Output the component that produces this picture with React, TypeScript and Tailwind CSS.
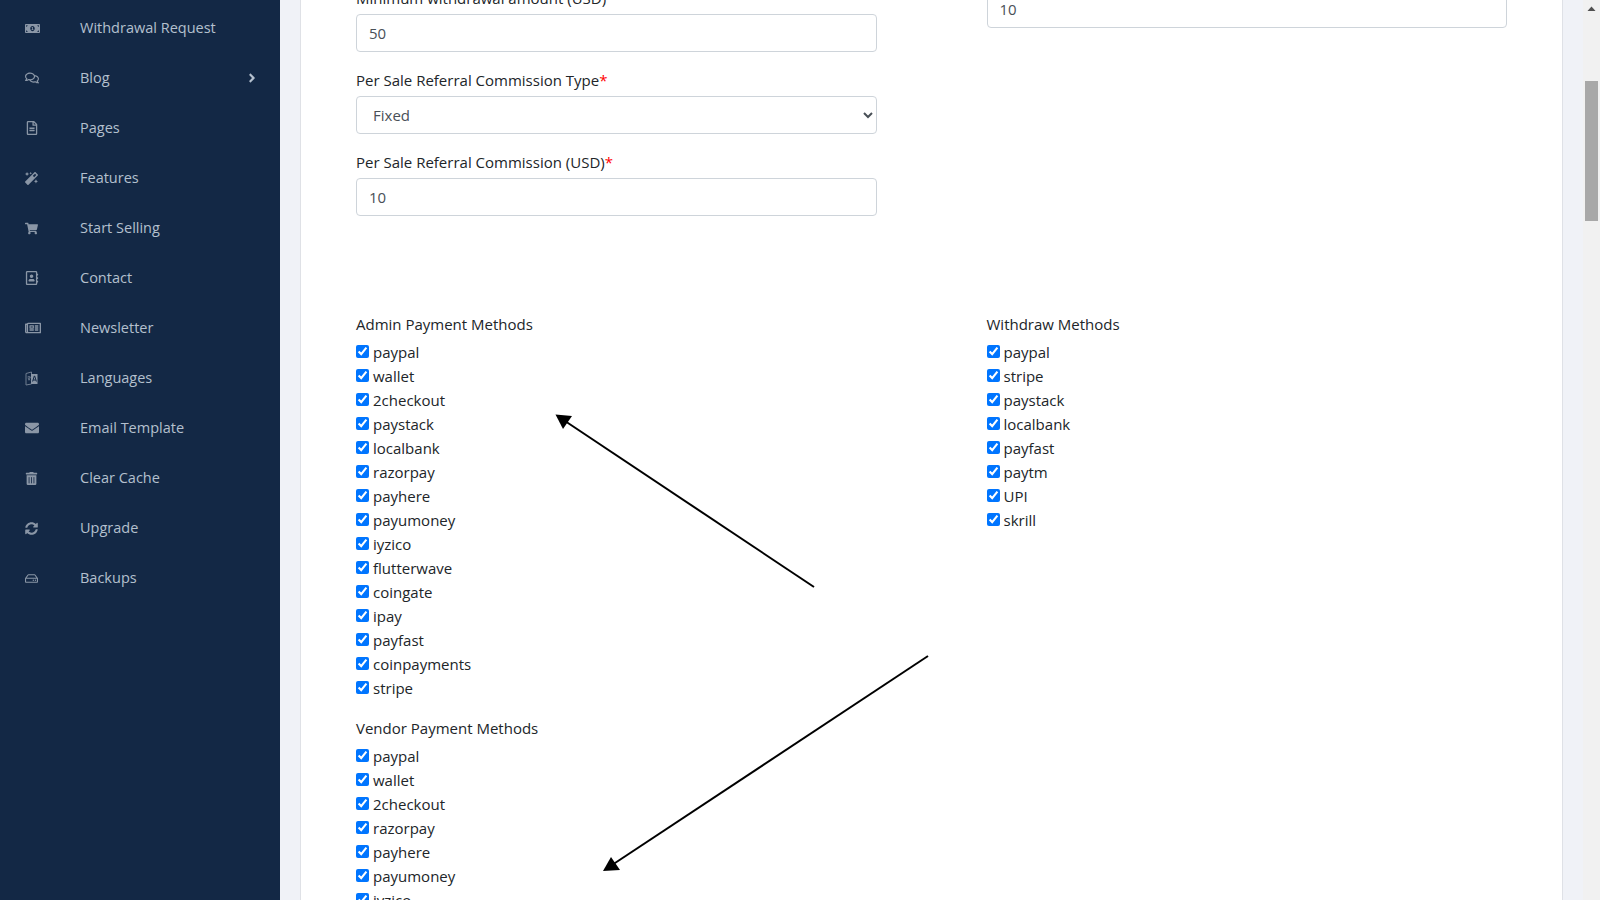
import { FaMoneyBillAlt, FaRegComments, FaRegFileAlt, FaMagic, FaShoppingCart, FaRegAddressBook, FaRegNewspaper, FaEnvelope, FaTrashAlt, FaSyncAlt, FaRegHdd, FaAngleRight } from "react-icons/fa";
import type { ReactNode } from "react";

function LanguageIcon() {
  return (
    <svg width="13" height="15" viewBox="0 0 13 15" fill="none">
      <path d="M1 2.5 6.5 1v12L1 14z" fill="#132845" stroke="#6f7d90" strokeWidth="1" />
      <path d="M6 3h6.5v10H6z" fill="#8a96a6" />
      <path d="M2.5 6h3M4 5v1M3 9c1 0 2-1.5 2.2-3M3 7c.4 1 1.2 1.8 2.2 2.2" stroke="#8a96a6" strokeWidth=".7" />
      <path d="M7.6 10.5 9.3 5h.4l1.7 5.5M8.2 9h2.6" stroke="#132845" strokeWidth="1" />
    </svg>
  );
}

const nav: [string, ReactNode][] = [
  ["Withdrawal Request", <FaMoneyBillAlt className="text-[15px]" />],
  ["Blog", <FaRegComments className="text-[14px]" />],
  ["Pages", <FaRegFileAlt className="text-[14px]" />],
  ["Features", <FaMagic className="text-[13px]" />],
  ["Start Selling", <FaShoppingCart className="text-[13px]" />],
  ["Contact", <FaRegAddressBook className="text-[14px]" />],
  ["Newsletter", <FaRegNewspaper className="text-[16px]" />],
  ["Languages", <LanguageIcon />],
  ["Email Template", <FaEnvelope className="text-[14px]" />],
  ["Clear Cache", <FaTrashAlt className="text-[13px]" />],
  ["Upgrade", <FaSyncAlt className="text-[13px]" />],
  ["Backups", <FaRegHdd className="text-[13px]" />],
];

const admin = ["paypal", "wallet", "2checkout", "paystack", "localbank", "razorpay", "payhere", "payumoney", "iyzico", "flutterwave", "coingate", "ipay", "payfast", "coinpayments", "stripe"];
const vendor = ["paypal", "wallet", "2checkout", "razorpay", "payhere", "payumoney", "iyzico"];
const withdraw = ["paypal", "stripe", "paystack", "localbank", "payfast", "paytm", "UPI", "skrill"];

const inputCls = "block w-full h-[38px] rounded border border-[#ced4da] bg-white px-3 text-[#495057] text-[15px] outline-none";

function Field({ label, req, children }: { label: string; req?: boolean; children: ReactNode }) {
  return (
    <div className="mb-[16px]">
      <div className="mb-[4px] h-[24px] leading-[24px]">
        {label}
        {req && <span className="text-[#ff0000]">*</span>}
      </div>
      {children}
    </div>
  );
}

function Checks({ title, items }: { title: string; items: string[] }) {
  return (
    <div className="mb-[16px]">
      <div className="mb-[4px] h-[24px] leading-[24px]">{title}</div>
      {items.map((m) => (
        <label key={m} className="flex h-[24px] items-center">
          <input type="checkbox" defaultChecked readOnly className="m-0 mr-[4px] mb-[2px] h-[13px] w-[13px] accent-[#0075ff]" />
          <span>{m}</span>
        </label>
      ))}
    </div>
  );
}

export default function App() {
  return (
    <div className="relative flex h-[900px] w-[1600px] overflow-hidden bg-[#f0f2f7] font-['Open_Sans','Noto_Sans',sans-serif]">
      <aside className="h-full w-[280px] shrink-0 bg-[#132845] pt-[3px]">
        {nav.map(([t, icon]) => (
          <div key={t} className="flex h-[50px] items-center text-[14.5px] text-[#b4c0ce]">
            <span className="flex w-[80px] shrink-0 pl-[25px] text-[#8a96a6]">{icon}</span>
            <span className="flex-1">{t}</span>
            {t === "Blog" && <FaAngleRight className="mr-[21px] text-[14px] text-[#b4c0ce]" />}
          </div>
        ))}
      </aside>
      <main className="flex-1 overflow-hidden px-[20px]">
        <div className="h-full overflow-hidden border-x border-[#dfe1e6] bg-white">
          <div className="-mt-[14px] grid grid-cols-2 gap-x-[110px] px-[55px] text-[15px] text-[#212529]">
            <div>
              <Field label="Minimum withdrawal amount (USD)">
                <input readOnly value="50" className={inputCls} />
              </Field>
              <Field label="Per Sale Referral Commission Type" req>
                <select className={inputCls} defaultValue="Fixed"><option>Fixed</option></select>
              </Field>
              <Field label="Per Sale Referral Commission (USD)" req>
                <input readOnly value="10" className={inputCls} />
              </Field>
            </div>
            <div className="pt-[4px]">
              <input readOnly value="10" className={inputCls} />
            </div>
          </div>
          <div className="mt-[80px] grid grid-cols-2 gap-x-[110px] px-[55px] text-[15px] text-[#212529]">
            <div>
              <Checks title="Admin Payment Methods" items={admin} />
              <Checks title="Vendor Payment Methods" items={vendor} />
            </div>
            <div>
              <Checks title="Withdraw Methods" items={withdraw} />
            </div>
          </div>
        </div>
      </main>
      <div className="flex h-full w-[17px] shrink-0 flex-col items-center bg-[#f1f1f1]">
        <svg width="17" height="17" viewBox="0 0 17 17" className="shrink-0"><path d="M4.5 11h8L8.5 6.5z" fill="#505050" /></svg>
        <div className="mt-[64px] h-[140px] w-[13px] bg-[#a8a8a8]" />
      </div>
      <svg className="pointer-events-none absolute left-0 top-0" width="1600" height="900" viewBox="0 0 1600 900">
        <line x1="814" y1="587" x2="562" y2="419" stroke="#000" strokeWidth="2" />
        <polygon points="555.5,414.5 572,416 563,429" fill="#000" />
        <line x1="928" y1="656" x2="612" y2="865" stroke="#000" strokeWidth="2" />
        <polygon points="603,871 611,857 620,870" fill="#000" />
      </svg>
    </div>
  );
}
